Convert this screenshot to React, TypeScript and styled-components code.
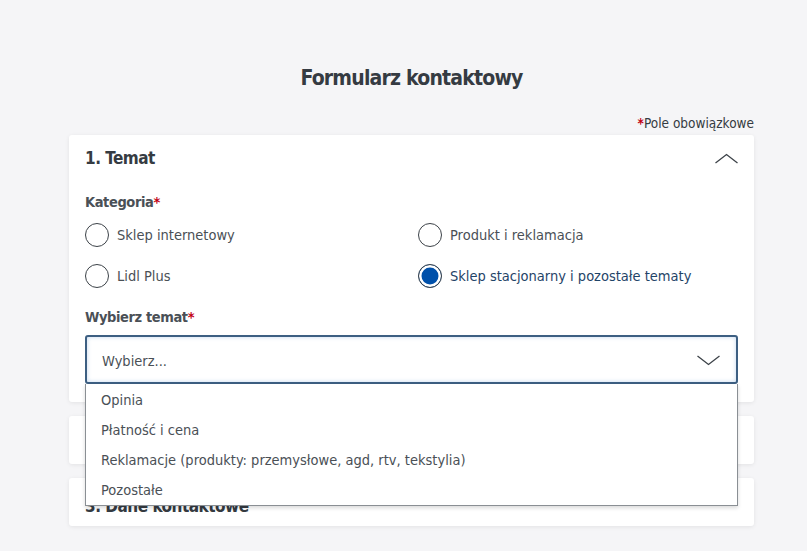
import React from 'react';
import styled, { createGlobalStyle } from 'styled-components';

const Global = createGlobalStyle`
  html, body {
    margin: 0;
    padding: 0;
    background: #f5f5f7;
  }
  body {
    font-family: "DejaVu Sans Condensed", "Liberation Sans Narrow", "Liberation Sans", sans-serif;
    color: #353b42;
  }
`;

const Page = styled.div`
  width: 807px;
  height: 551px;
  overflow: hidden;
  padding: 0 53px 0 69px;
  box-sizing: border-box;
`;

const Title = styled.h1`
  margin: 0;
  padding-top: 63px;
  height: 30px;
  line-height: 30px;
  text-align: center;
  font-size: 21px;
  letter-spacing: -0.8px;
  font-weight: 700;
  color: #353b42;
`;

const Required = styled.div`
  margin-top: 20px;
  text-align: right;
  font-size: 13.5px;
  line-height: 20px;
  height: 22px;
`;

const Star = styled.span`
  color: #c20014;
  font-weight: 700;
`;

const Cards = styled.div`
  display: flex;
  flex-direction: column;
  gap: 14px;
`;

const Card = styled.section<{ $h?: number }>`
  position: relative;
  background: #fff;
  border-radius: 3px;
  box-shadow: 0 1px 4px rgba(0, 0, 0, 0.08);
  height: ${p => (p.$h ? `${p.$h}px` : 'auto')};
  padding: 0 16px;
`;

const CardHead = styled.div<{ $top?: number }>`
  display: flex;
  align-items: center;
  justify-content: space-between;
  height: 44px;
  padding-top: ${p => p.$top ?? 1}px;
`;

const CardTitle = styled.h2`
  margin: 0;
  font-size: 17px;
  letter-spacing: -0.5px;
  font-weight: 700;
  color: #353b42;
`;

const Label = styled.div<{ $gap: number }>`
  font-size: 14.5px;
  letter-spacing: -0.4px;
  font-weight: 700;
  color: #4a5056;
  line-height: 20px;
  margin-top: ${p => p.$gap}px;
`;

const RadioGrid = styled.div`
  display: grid;
  grid-template-columns: 333px 1fr;
  row-gap: 17px;
  margin-top: 11px;
`;

const RadioRow = styled.label<{ $checked?: boolean }>`
  display: flex;
  align-items: center;
  gap: 8px;
  font-size: 14.5px;
  line-height: 24px;
  color: ${p => (p.$checked ? '#1f4468' : '#4a5056')};
`;

const RadioDot = styled.span<{ $checked?: boolean }>`
  width: 24px;
  height: 24px;
  box-sizing: border-box;
  border-radius: 50%;
  border: 1.5px solid #3c4248;
  background: ${p => (p.$checked ? '#0050aa' : '#fff')};
  box-shadow: ${p => (p.$checked ? 'inset 0 0 0 2.5px #fff' : 'none')};
  flex: none;
`;

const SelectWrap = styled.div`
  position: relative;
  margin-top: 8px;
  padding-bottom: 18px;
`;

const SelectBox = styled.div`
  height: 49px;
  box-sizing: border-box;
  border: 2px solid #3d5f82;
  border-radius: 3px;
  box-shadow: inset 0 0 4px rgba(80, 140, 210, 0.35);
  display: flex;
  align-items: center;
  justify-content: space-between;
  padding: 2px 16px 0 15px;
  font-size: 14.5px;
  color: #4a5056;
`;

const Menu = styled.ul`
  position: absolute;
  left: 0;
  right: 0;
  top: 49px;
  z-index: 5;
  margin: 0;
  padding: 1px 0 0;
  list-style: none;
  background: #fff;
  border: 1px solid #8a8f94;
  border-top: none;
  box-shadow: 0 2px 4px rgba(0, 0, 0, 0.15);
`;

const MenuItem = styled.li`
  height: 30px;
  line-height: 30px;
  padding-left: 15px;
  font-size: 14.5px;
  color: #4a5056;
`;

const Chevron = ({ up }: { up?: boolean }) => (
  <svg width="23" height="11" viewBox="0 0 23 11" fill="none">
    <path
      d={up ? 'M0.5 10 L11.5 1.5 L22.5 10' : 'M0.5 1 L11.5 9.5 L22.5 1'}
      stroke="#3c4248"
      strokeWidth="1.3"
    />
  </svg>
);

const categories = [
  { label: 'Sklep internetowy' },
  { label: 'Produkt i reklamacja' },
  { label: 'Lidl Plus' },
  { label: 'Sklep stacjonarny i pozostałe tematy', checked: true },
];

const topics = [
  'Opinia',
  'Płatność i cena',
  'Reklamacje (produkty: przemysłowe, agd, rtv, tekstylia)',
  'Pozostałe',
];

export default function App() {
  return (
    <Page>
      <Global />
      <Title>Formularz kontaktowy</Title>
      <Required>
        <Star>*</Star>Pole obowiązkowe
      </Required>
      <Cards>
        <Card>
          <CardHead>
            <CardTitle>1. Temat</CardTitle>
            <Chevron up />
          </CardHead>
          <Label $gap={12}>
            Kategoria<Star>*</Star>
          </Label>
          <RadioGrid>
            {categories.map(c => (
              <RadioRow key={c.label} $checked={c.checked}>
                <RadioDot $checked={c.checked} />
                {c.label}
              </RadioRow>
            ))}
          </RadioGrid>
          <Label $gap={19}>
            Wybierz temat<Star>*</Star>
          </Label>
          <SelectWrap>
            <SelectBox>
              Wybierz...
              <Chevron />
            </SelectBox>
            <Menu>
              {topics.map(t => (
                <MenuItem key={t}>{t}</MenuItem>
              ))}
            </Menu>
          </SelectWrap>
        </Card>
        <Card $h={48}>
          <CardHead $top={4}>
            <CardTitle>2. Twoja wiadomość</CardTitle>
          </CardHead>
        </Card>
        <Card $h={48}>
          <CardHead $top={6}>
            <CardTitle>3. Dane kontaktowe</CardTitle>
          </CardHead>
        </Card>
      </Cards>
    </Page>
  );
}
